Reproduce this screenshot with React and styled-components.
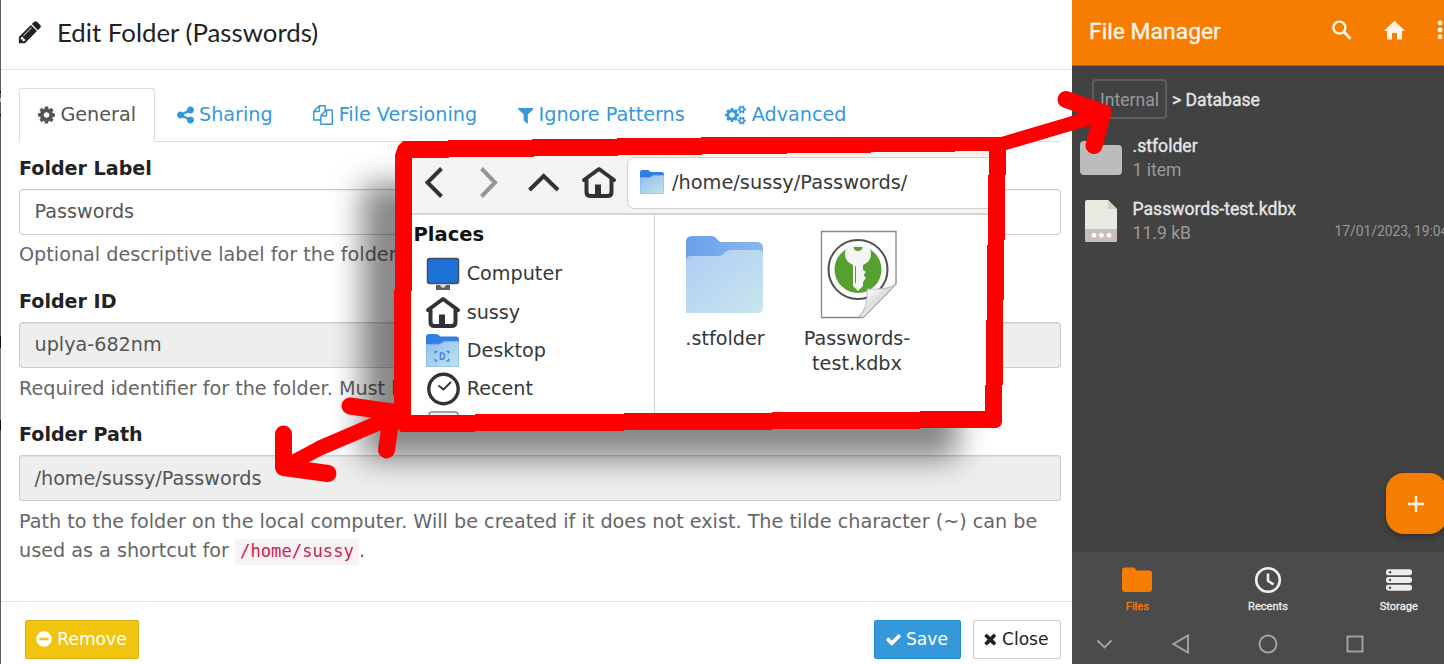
import React from "react";
import styled, { createGlobalStyle, css } from "styled-components";

const Global = createGlobalStyle`
  * { box-sizing: border-box; }
  body { margin: 0; background: #fff; overflow: hidden; }
`;

const sans = `"DejaVu Sans", sans-serif`;

const Page = styled.div`
  position: relative;
  display: flex;
  width: 1444px;
  height: 664px;
  overflow: hidden;
  font-family: ${sans};
`;

/* ---------- folder dialog ---------- */

const Backdrop = styled.div`
  width: 1px;
  background: linear-gradient(#5c5c60 0 91px, #111 91px 93px, #5c5c60 93px 98px, #bbb 98px 102px, #5c5c60 102px 114px, #111 114px 116px, #55555a 116px 336px, #111 336px 348px, #77777b 348px 420px, #111 420px 430px, #5c5c60 430px);
`;

const Dialog = styled.section`
  display: flex;
  flex-direction: column;
  width: 1071px;
  background: #fff;
  color: #222;
  font-size: 19.2px;
  white-space: nowrap;
`;

const DialogHeader = styled.header`
  display: flex;
  align-items: center;
  gap: 15px;
  height: 70px;
  padding: 0 17px 5px;
  border-bottom: 1px solid #e2e2e2;
`;

const Title = styled.h4`
  margin: 0;
  padding-bottom: 1px;
  font: 400 25.8px/30px Lato, sans-serif;
  color: #222;
`;

const Tabs = styled.nav`
  display: flex;
  gap: 2.3px;
  margin: 18px 11px 0 18px;
  height: 54px;
  border-bottom: 1px solid #ddd;
`;

const Tab = styled.a`
  display: flex;
  align-items: center;
  gap: 5.4px;
  height: 54px;
  padding: 0 18.3px 1px 18px;
  border: 1px solid transparent;
  color: #3498db;
  ${(p) =>
    p.$active &&
    css`
      color: #555;
      background: #fff;
      border-color: #ddd #ddd transparent;
      border-radius: 3px 3px 0 0;
    `}
`;

const Form = styled.div`
  flex: 1;
  padding: 12px 11px 0 18px;
`;

const Group = styled.div`
  display: flex;
  flex-direction: column;
  margin-bottom: 18px;

  &:last-child {
    margin-top: -1px;
  }
`;

const Label = styled.label`
  height: 28px;
  margin-bottom: 7px;
  font-weight: 700;
  font-size: 19.1px;
  line-height: 29px;
`;

const Field = styled.div`
  height: 46px;
  margin-bottom: 5px;
  padding: 0 14.5px;
  border: 1px solid #ccc;
  border-radius: 3px;
  background: ${(p) => (p.$readOnly ? "#eee" : "#fff")};
  box-shadow: inset 0 1px 1px rgba(0, 0, 0, 0.075);
  color: #555;
  font-size: 19.2px;
  line-height: ${(p) => p.$line ?? 43}px;
`;

const Help = styled.p`
  margin: 0;
  padding-top: ${(p) => p.$drop ?? 0}px;
  color: #666;
  line-height: 29px;
`;

const Code = styled.code`
  padding: 2px 5px 4px;
  border-radius: 3px;
  background: #f9f2f4;
  color: #c7254e;
  font: 17.2px "DejaVu Sans Mono", monospace;
`;

const DialogFooter = styled.footer`
  display: flex;
  align-items: flex-start;
  gap: 12px;
  height: 63px;
  padding: 18px 11px 0 24px;
  border-top: 1px solid #e2e2e2;
`;

const tones = {
  warning: ["#f1c40f", "#dab10d", "#fff"],
  primary: ["#3498db", "#258cd1", "#fff"],
  plain: ["#fff", "#ccc", "#222"],
};

const Button = styled.button`
  display: flex;
  align-items: center;
  justify-content: center;
  gap: 5px;
  width: ${(p) => p.$width}px;
  height: 39px;
  margin: 0 ${(p) => (p.$push ? "auto" : 0)} 0 0;
  padding: 0 1px 1px 0;
  border: 1px solid ${(p) => tones[p.$tone][1]};
  border-radius: 2px;
  background: ${(p) => tones[p.$tone][0]};
  color: ${(p) => tones[p.$tone][2]};
  font: 17.1px ${sans};
  white-space: nowrap;
`;

const glyphs = {
  pencil: "M491 1536l91-91-235-235-91 91v107h128v128h107zm523-928q0-22-22-22-10 0-17 7l-542 542q-7 7-7 17 0 22 22 22 10 0 17-7l542-542q7-7 7-17zm-54-192l416 416-832 832h-416v-416zm683 96q0 53-37 90l-166 166-416-416 166-165q36-38 90-38 53 0 91 38l235 234q37 39 37 91z",
  cog: "M1152 896q0-106-75-181t-181-75-181 75-75 181 75 181 181 75 181-75 75-181zm512-109v222q0 12-8 23t-20 13l-185 28q-19 54-39 91 35 50 107 138 10 12 10 25t-9 23q-27 37-99 108t-94 71q-12 0-26-9l-138-108q-44 23-91 38-16 136-29 186-7 28-36 28h-222q-14 0-24.5-8.5t-11.5-21.5l-28-184q-49-16-90-37l-141 107q-10 9-25 9-14 0-25-11-126-114-165-168-7-10-7-23 0-12 8-23 15-21 51-66.5t54-70.5q-27-50-41-99l-183-27q-13-2-21-12.5t-8-23.5v-222q0-12 8-23t19-13l186-28q14-46 39-92-40-57-107-138-10-12-10-24 0-10 9-23 26-36 98.5-107.5t94.5-71.5q13 0 26 10l138 107q44-23 91-38 16-136 29-186 7-28 36-28h222q14 0 24.5 8.5t11.5 21.5l28 184q49 16 90 37l142-107q9-9 24-9 13 0 25 10 129 119 165 170 7 8 7 22 0 12-8 23-15 21-51 66.5t-54 70.5q26 50 41 98l183 28q13 2 21 12.5t8 23.5z",
  share: "M1344 1024q133 0 226.5 93.5t93.5 226.5-93.5 226.5-226.5 93.5-226.5-93.5-93.5-226.5q0-12 2-34l-360-180q-92 86-218 86-133 0-226.5-93.5t-93.5-226.5 93.5-226.5 226.5-93.5q126 0 218 86l360-180q-2-22-2-34 0-133 93.5-226.5t226.5-93.5 226.5 93.5 93.5 226.5-93.5 226.5-226.5 93.5q-126 0-218-86l-360 180q2 22 2 34t-2 34l360 180q92-86 218-86z",
  files: "M1696 384q40 0 68 28t28 68v1216q0 40-28 68t-68 28h-960q-40 0-68-28t-28-68v-288h-544q-40 0-68-28t-28-68v-672q0-40 20-88t48-76l408-408q28-28 76-48t88-20h416q40 0 68 28t28 68v328q68-40 128-40h416zm-544 213l-299 299h299v-299zm-640-384l-299 299h299v-299zm196 647l316-316v-416h-384v416q0 40-28 68t-68 28h-416v640h512v-256q0-40 20-88t48-76zm956 804v-1152h-384v416q0 40-28 68t-68 28h-416v640h896z",
  filter: "M1595 295q17 41-14 70l-493 493v742q0 42-39 59-13 5-25 5-27 0-45-19l-256-256q-19-19-19-45v-486l-493-493q-31-29-14-70 17-39 59-39h1280q42 0 59 39z",
  minus: "M1344 960v-128q0-26-19-45t-45-19h-768q-26 0-45 19t-19 45v128q0 26 19 45t45 19h768q26 0 45-19t19-45zm320-64q0 209-103 385.5t-279.5 279.5-385.5 103-385.5-103-279.5-279.5-103-385.5 103-385.5 279.5-279.5 385.5-103 385.5 103 279.5 279.5 103 385.5z",
  check: "M1671 566q0 40-28 68l-724 724-136 136q-28 28-68 28t-68-28l-136-136-362-362q-28-28-28-68t28-68l136-136q28-28 68-28t68 28l294 295 656-657q28-28 68-28t68 28l136 136q28 28 28 68z",
  times: "M1490 1322q0 40-28 68l-136 136q-28 28-68 28t-68-28l-294-294-294 294q-28 28-68 28t-68-28l-136-136q-28-28-28-68t28-68l294-294-294-294q-28-28-28-68t28-68l136-136q28-28 68-28t68 28l294 294 294-294q28-28 68-28t68 28l136 136q28 28 28 68t-28 68l-294 294 294 294q28 28 28 68z",
  cogs: "M896 896q0-106-75-181t-181-75-181 75-75 181 75 181 181 75 181-75 75-181zm768 512q0-52-38-90t-90-38-90 38-38 90q0 53 37.5 90.5t90.5 37.5 90.5-37.5 37.5-90.5zm0-1024q0-52-38-90t-90-38-90 38-38 90q0 53 37.5 90.5t90.5 37.5 90.5-37.5 37.5-90.5zm-384 421v185q0 10-7 19.5t-16 10.5l-155 24q-11 35-32 76 34 48 90 115 7 11 7 20 0 12-7 19-23 30-82.5 89.5t-78.5 59.5q-11 0-21-7l-115-90q-37 19-77 31-11 108-23 155-7 24-30 24h-186q-11 0-20-7.5t-10-17.5l-23-153q-34-10-75-31l-118 89q-7 7-20 7-11 0-21-8-144-133-144-160 0-9 7-19 10-14 41-53t47-61q-23-44-35-82l-152-24q-10-1-17-9.5t-7-19.5v-185q0-10 7-19.5t16-10.5l155-24q11-35 32-76-34-48-90-115-7-11-7-20 0-12 7-20 22-30 82-89t79-59q11 0 21 7l115 90q34-18 77-32 11-108 23-154 7-24 30-24h186q11 0 20 7.5t10 17.5l23 153q34 10 75 31l118-89q8-7 20-7 11 0 21 8 144 133 144 160 0 8-7 19-12 16-42 54t-45 60q23 48 34 82l152 23q10 2 17 10.5t7 19.5zm640 533v140q0 16-149 31-12 27-30 52 51 113 51 138 0 4-4 7-122 71-124 71-8 0-46-47t-52-68q-20 2-30 2t-30-2q-14 21-52 68t-46 47q-2 0-124-71-4-3-4-7 0-25 51-138-18-25-30-52-149-15-149-31v-140q0-16 149-31 13-29 30-52-51-113-51-138 0-4 4-7 4-2 35-20t59-34 30-16q8 0 46 46.5t52 67.5q20-2 30-2t30 2q51-71 92-112l6-2q4 0 124 70 4 3 4 7 0 25-51 138 17 23 30 52 149 15 149 31zm0-1024v140q0 16-149 31-12 27-30 52 51 113 51 138 0 4-4 7-122 71-124 71-8 0-46-47t-52-68q-20 2-30 2t-30-2q-14 21-52 68t-46 47q-2 0-124-71-4-3-4-7 0-25 51-138-18-25-30-52-149-15-149-31v-140q0-16 149-31 13-29 30-52-51-113-51-138 0-4 4-7 4-2 35-20t59-34 30-16q8 0 46 46.5t52 67.5q20-2 30-2t30 2q51-71 92-112l6-2q4 0 124 70 4 3 4 7 0 25-51 138 17 23 30 52 149 15 149 31z",
};

function Glyph({ name, box = "128 0 1536 1792", w, h }) {
  return (
    <svg width={w} height={h} viewBox={box} fill="currentColor">
      <path d={glyphs[name]} />
    </svg>
  );
}

function FolderDialog() {
  return (
    <Dialog>
      <DialogHeader>
        <Glyph name="pencil" w={24} h={26} />
        <Title>Edit Folder (Passwords)</Title>
      </DialogHeader>
      <Tabs>
        <Tab $active><Glyph name="cog" w={17} h={20} />General</Tab>
        <Tab><Glyph name="share" w={17} h={20} />Sharing</Tab>
        <Tab><Glyph name="files" box="0 0 1792 1792" w={20} h={20} />File Versioning</Tab>
        <Tab><Glyph name="filter" box="192 0 1408 1792" w={15.5} h={20} />Ignore Patterns</Tab>
        <Tab><Glyph name="cogs" box="0 0 1920 1792" w={21} h={20} />Advanced</Tab>
      </Tabs>
      <Form>
        <Group>
          <Label>Folder Label</Label>
          <Field>Passwords</Field>
          <Help>Optional descriptive label for the folder.</Help>
        </Group>
        <Group>
          <Label>Folder ID</Label>
          <Field $readOnly>uplya-682nm</Field>
          <Help $drop={1}>Required identifier for the folder. Must be</Help>
        </Group>
        <Group>
          <Label>Folder Path</Label>
          <Field $readOnly $line={45}>/home/sussy/Passwords</Field>
          <Help $drop={1}>
            Path to the folder on the local computer. Will be created if it does not exist. The tilde character (~) can be
            <br />
            used as a shortcut for <Code>/home/sussy</Code>.
          </Help>
        </Group>
      </Form>
      <DialogFooter>
        <Button $tone="warning" $width={114} $push><Glyph name="minus" w={16} h={18} />Remove</Button>
        <Button $tone="primary" $width={87}><Glyph name="check" w={15} h={17} />Save</Button>
        <Button $tone="plain" $width={88}><Glyph name="times" box="250 0 1292 1792" w={12.5} h={18} />Close</Button>
      </DialogFooter>
    </Dialog>
  );
}

/* ---------- phone ---------- */

const Phone = styled.section`
  position: relative;
  display: flex;
  flex-direction: column;
  width: 372px;
  background: #424242;
  color: #e6e6e6;
  font-family: Roboto, sans-serif;
  white-space: nowrap;
  overflow: hidden;
`;

const AppBar = styled.header`
  display: flex;
  align-items: center;
  height: 66px;
  padding: 0 0 4px 17px;
  background: #f77d00;
  border-bottom: 1px solid #a9601a;
  color: #fdf3e8;
`;

const AppTitle = styled.div`
  width: 243px;
  padding-top: 2px;
  font-size: 22.9px;
  -webkit-text-stroke: 0.35px currentColor;
`;

const AppIcons = styled.div`
  display: flex;
  align-items: center;
  flex: none;
  color: #fff4e8;
`;

const Crumbs = styled.div`
  display: flex;
  align-items: center;
  gap: 5px;
  margin: 13px 0 14px 20px;
  height: 40px;
  font-size: 17.6px;
`;

const CrumbBox = styled.span`
  width: 75px;
  height: 40px;
  border: 2px solid #5e5e5e;
  border-radius: 4px;
  color: #999;
  line-height: 38px;
  text-align: center;
`;

const Crumb = styled.span`
  padding-top: 2px;
  -webkit-text-stroke: 0.35px currentColor;
`;

const FileRow = styled.div`
  display: flex;
  height: 63px;
  padding-left: 8px;
`;

const FileIcon = styled.div`
  flex: none;
  width: 52.5px;
  padding: ${(p) => p.$pad};
`;

const FileText = styled.div`
  flex: none;
  width: 202px;
  padding-top: 1px;
  font-size: 17.6px;
  line-height: 24px;
`;

const FileName = styled.div`
  -webkit-text-stroke: 0.35px currentColor;
`;

const Muted = styled.div`
  color: #999;
`;

const Stamp = styled.div`
  padding-top: 23px;
  color: #999;
  font-size: 13.9px;
  line-height: 24px;
  letter-spacing: -0.05px;
`;

const Fab = styled.div`
  position: absolute;
  left: 313.5px;
  top: 473px;
  display: flex;
  align-items: center;
  justify-content: center;
  width: 61px;
  height: 61px;
  border-radius: 18px;
  background: #f77d00;
  box-shadow: 0 3px 6px rgba(0, 0, 0, 0.3);
`;

const BottomNav = styled.nav`
  display: flex;
  height: 70px;
  margin-top: auto;
  padding-top: 14px;
  background: #4b4b4b;
`;

const NavItem = styled.div`
  display: flex;
  flex: 0 0 130.7px;
  flex-direction: column;
  align-items: center;
  gap: 6px;
  color: ${(p) => (p.$active ? "#f77d00" : "#eee")};
  font-size: 11.1px;
  line-height: 14px;
  -webkit-text-stroke: 0.3px currentColor;
`;

const SystemBar = styled.div`
  display: flex;
  height: 42px;
  padding: 2px 0 0 17px;
  background: #4b4b4b;
`;

function PhoneScreen() {
  return (
    <Phone>
      <AppBar>
        <AppTitle>File Manager</AppTitle>
        <AppIcons>
          <svg width="112" height="24" viewBox="0 0 112 24" fill="none">
            <circle cx="7.4" cy="8.6" r="6" stroke="currentColor" strokeWidth="2.4" />
            <path d="M12 13l6.5 6.8" stroke="currentColor" strokeWidth="2.8" />
            <path d="M62.5 1.8L73 11.8H70V20.5H65V14H60V20.5H55V11.8H52Z" fill="currentColor" />
            <circle cx="108" cy="4" r="2.4" fill="currentColor" />
            <circle cx="108" cy="11" r="2.4" fill="currentColor" />
            <circle cx="108" cy="17.8" r="2.4" fill="currentColor" />
          </svg>
        </AppIcons>
      </AppBar>
      <Crumbs>
        <CrumbBox>Internal</CrumbBox>
        <Crumb>&gt; Database</Crumb>
      </Crumbs>
      <FileRow>
        <FileIcon $pad="8px 0 0 0">
          <svg width="42" height="34" viewBox="0 0 42 34">
            <path d="M4 0H15L20 4H38Q42 4 42 8V30Q42 34 38 34H4Q0 34 0 30V4Q0 0 4 0Z" fill="#bcbcbc" />
          </svg>
        </FileIcon>
        <FileText>
          <FileName>.stfolder</FileName>
          <Muted>1 item</Muted>
        </FileText>
      </FileRow>
      <FileRow>
        <FileIcon $pad="4px 0 0 5px">
          <svg width="32" height="42" viewBox="0 0 32 42">
            <path d="M2 0H23L32 9V40Q32 42 30 42H2Q0 42 0 40V2Q0 0 2 0Z" fill="#e8e9e0" />
            <path d="M23 0L32 9H23Z" fill="#d0d0c4" />
            <path d="M0 29H32V40Q32 42 30 42H2Q0 42 0 40Z" fill="#cbbdb9" />
            <g fill="#fff"><circle cx="9" cy="35.3" r="2.4" /><circle cx="16.4" cy="35.3" r="2.4" /><circle cx="24" cy="35.3" r="2.4" /></g>
          </svg>
        </FileIcon>
        <FileText>
          <FileName>Passwords-test.kdbx</FileName>
          <Muted>11.9 kB</Muted>
        </FileText>
        <Stamp>17/01/2023, 19:04</Stamp>
      </FileRow>
      <Fab>
        <svg width="16" height="16" viewBox="0 0 16 16" stroke="#fff4e6" strokeWidth="2.4">
          <path d="M8 0V16M0 8H16" />
        </svg>
      </Fab>
      <BottomNav>
        <NavItem $active>
          <svg width="30" height="28" viewBox="0 0 30 28">
            <path d="M3 1.5H12L15 4.5H27Q30 4.5 30 7.5V23Q30 26 27 26H3Q0 26 0 23V4.5Q0 1.5 3 1.5Z" fill="currentColor" />
          </svg>
          Files
        </NavItem>
        <NavItem>
          <svg width="28" height="28" viewBox="0 0 28 28" fill="none" stroke="currentColor" strokeWidth="2.6">
            <circle cx="14" cy="14" r="11.8" />
            <path d="M14 7.5V14.8L19.5 18.5" />
          </svg>
          Recents
        </NavItem>
        <NavItem>
          <svg width="26" height="28" viewBox="0 0 26 28">
            <g fill="currentColor">
              <rect y="3.3" width="26" height="6" rx="2.4" />
              <rect y="11" width="26" height="6" rx="2.4" />
              <rect y="18.7" width="26" height="6" rx="2.4" />
            </g>
            <g fill="#555"><circle cx="4" cy="6.3" r="1.3" /><circle cx="4" cy="14" r="1.3" /><circle cx="4" cy="21.7" r="1.3" /></g>
          </svg>
          Storage
        </NavItem>
      </BottomNav>
      <SystemBar>
        <svg width="290" height="40" viewBox="0 0 290 40" fill="none" stroke="#a3a3a3" strokeWidth="1.9">
          <path d="M8.5 16.5L15.5 23.5L22.5 16.5" />
          <path d="M99 11.5V28.5L84.5 20Z" />
          <circle cx="179" cy="20" r="8.5" />
          <rect x="258.5" y="12.5" width="15" height="15" />
        </svg>
      </SystemBar>
    </Phone>
  );
}

/* ---------- file browser window over the dialog ---------- */

const Shadow = styled.div`
  position: absolute;
  left: 362px;
  top: 184px;
  width: 596px;
  height: 275px;
  background: rgba(0, 0, 0, 0.47);
  filter: blur(15px);
`;

const Browser = styled.section`
  position: absolute;
  left: 404px;
  top: 148px;
  display: flex;
  flex-direction: column;
  width: 592px;
  height: 274px;
  overflow: hidden;
  background: #fff;
  color: #34393b;
  font-size: 19.2px;
  white-space: nowrap;
`;

const Toolbar = styled.div`
  display: flex;
  flex: none;
  height: 67px;
  padding-top: 9px;
  background: #f5f4f2;
  border-bottom: 2px solid #d8d4d0;
`;

const Location = styled.div`
  display: flex;
  align-items: center;
  flex: 1;
  gap: 8px;
  height: 52px;
  padding: 0 0 2px 12px;
  border: 1.5px solid #d5d0cc;
  border-right: 0;
  border-radius: 7px 0 0 7px;
  background: #fff;
  font-size: 19.35px;
`;

const HomeCell = styled.div`
  width: 46px;
  padding-top: 8px;
`;

const Panes = styled.div`
  display: flex;
  flex: 1;
  min-height: 0;
`;

const Places = styled.aside`
  width: 251px;
  padding-left: 9.5px;
  border-right: 1.5px solid #d5d0cc;
`;

const PlacesTitle = styled.div`
  height: 38px;
  color: #111;
  font-weight: 700;
  font-size: 19.5px;
  line-height: 39px;
`;

const Place = styled.div`
  display: flex;
  align-items: center;
  height: 38.4px;
  padding: 3px 0 0 12px;
`;

const PlaceIcon = styled.span`
  display: flex;
  justify-content: center;
  width: 36px;
  margin: 0 6.2px 0 -1px;
`;

const Files = styled.div`
  display: flex;
  padding: 15px 0 0 4px;
`;

const Item = styled.div`
  display: flex;
  flex-direction: column;
  align-items: center;
  width: 132px;
  line-height: 25px;
  text-align: center;
`;

const HomeIcon = () => (
  <svg width="36" height="34" viewBox="0 0 36 34" fill="none" stroke="#2e3436" strokeWidth="4" strokeLinecap="round" strokeLinejoin="round">
    <path d="M3 15L18 4L33 15" />
    <path d="M5.5 15V27Q5.5 31 9.5 31H26.5Q30.5 31 30.5 27V15" />
    <path d="M14 31V19.5H20V31Z" fill="#2e3436" stroke="none" />
  </svg>
);

const SmallFolder = ({ size, mark }) => (
  <svg width={size} height={size} viewBox="0 0 32 32">
    <defs>
      <linearGradient id={`sf${size}`} x1="0" y1="0" x2="1" y2="1">
        <stop offset="0" stopColor="#95bdf2" />
        <stop offset="1" stopColor="#bfe4e8" />
      </linearGradient>
    </defs>
    <path d="M0 3Q0 0 3 0H10Q12 0 14 2.5H29Q32 2.5 32 5.5V22H0Z" fill="#2f7fe2" />
    <path d="M0 10H12Q14 10 16 8Q17 7 19 7H32V29Q32 32 29 32H0Z" fill={`url(#sf${size})`} stroke="#73a7ee" strokeWidth=".8" />
    {mark && (
      <g fill="none" stroke="#4187e2" strokeWidth="1.4">
        <path d="M9 19V17H11M20 17H22V19M9 24V26H11M20 26H22V24" />
        <path d="M14 18.5V24.5H15.5Q18 24.5 18 21.5T15.5 18.5Z" />
      </g>
    )}
  </svg>
);

function FileBrowser() {
  return (
    <Browser>
      <Toolbar>
        <svg width="177" height="50" viewBox="0 0 177 50" fill="none" stroke="#2e3436" strokeWidth="4">
          <path d="M37.5 11.5L23.5 25.5L37.5 39.5" />
          <path d="M77.5 11.5L91 25.5L77.5 39.5" stroke="#929696" />
          <path d="M125.5 33L139.7 19L154 33" />
        </svg>
        <HomeCell><HomeIcon /></HomeCell>
        <Location>
          <SmallFolder size={24} />
          <span>/home/sussy/Passwords/</span>
        </Location>
      </Toolbar>
      <Panes>
        <Places>
          <PlacesTitle>Places</PlacesTitle>
          <Place>
            <PlaceIcon>
              <svg width="34" height="34" viewBox="0 0 34 34">
                <rect x="1.5" y="1.5" width="31" height="25" rx="2" fill="#1c71d8" stroke="#4d4960" strokeWidth="1.5" />
                <path d="M10 28H24V33H10Z" fill="#5e5c64" />
                <path d="M14 28H20Q19 31 17 31T14 28Z" fill="#d8d8d8" />
              </svg>
            </PlaceIcon>
            Computer
          </Place>
          <Place><PlaceIcon><HomeIcon /></PlaceIcon>sussy</Place>
          <Place><PlaceIcon><SmallFolder size={33} mark /></PlaceIcon>Desktop</Place>
          <Place>
            <PlaceIcon>
              <svg width="34" height="34" viewBox="0 0 34 34" fill="none" stroke="#2e3436">
                <circle cx="17.5" cy="17" r="14.7" strokeWidth="3.4" />
                <path d="M12.5 13.5L17.5 17.5L25 10" strokeWidth="1.8" />
              </svg>
            </PlaceIcon>
            Recent
          </Place>
          <Place>
            <PlaceIcon>
              <svg width="34" height="38" viewBox="0 0 34 38">
                <rect x="3" y="4" width="29" height="30" rx="3" fill="#f0f0f0" stroke="#8a8c8d" strokeWidth="1.5" />
              </svg>
            </PlaceIcon>
          </Place>
        </Places>
        <Files>
          <Item>
            <svg width="78" height="96" viewBox="0 0 78 96">
              <defs>
                <linearGradient id="back" x1="0" x2="1"><stop offset="0" stopColor="#68a1ea" /><stop offset="1" stopColor="#8ab7ef" /></linearGradient>
                <linearGradient id="front" x1="0" y1="0" x2="1" y2="1"><stop offset="0" stopColor="#afcdf6" /><stop offset="1" stopColor="#c9e5ec" /></linearGradient>
              </defs>
              <path d="M0 12Q0 6 6 6H26Q29 6 31 9L34 12H71Q77 12 77 18V50H0Z" fill="url(#back)" />
              <path d="M0 31Q0 26 5 26H32Q36 26 38 23Q41 20 45 20H73Q77 20 77 25V78Q77 83 72 83H0Z" fill="url(#front)" />
            </svg>
            .stfolder
          </Item>
          <Item>
            <svg width="80" height="96" viewBox="-2 0 80 96">
              <defs>
                <linearGradient id="curl" x1="0" y1="0" x2="1" y2="1"><stop offset="0" stopColor="#fff" /><stop offset=".3" stopColor="#f2f2f2" /><stop offset=".48" stopColor="#dcdcdc" /><stop offset=".62" stopColor="#fff" /><stop offset="1" stopColor="#b5b5b5" /></linearGradient>
              </defs>
              <path d="M2.5 1.5H77V54L44 87.5H2.5Z" fill="#fff" stroke="#888" strokeWidth="1.3" />
              <circle cx="39" cy="39.5" r="29.5" fill="#fff" stroke="#505050" strokeWidth="2" />
              <circle cx="39" cy="39.5" r="23.5" fill="#55a02f" />
              <path d="M26.5 20Q39 9 51.5 20Q54 31 44 35V40L47 42L44.5 45L47 48L44 52V56L39 61L34 56V35Q24 31 26.5 20Z" fill="#f5f5f5" />
              <path d="M34.5 17H43.5Q43 21 39 21T34.5 17Z" fill="#55a02f" />
              <path d="M36.5 36V53" stroke="#55a02f" strokeWidth="1" />
              <path d="M77 54Q70 60 48 59Q49 79 40 86.5L44 87.5Z" fill="url(#curl)" stroke="#aaa" strokeWidth=".8" />
            </svg>
            Passwords-<br />test.kdbx
          </Item>
        </Files>
      </Panes>
    </Browser>
  );
}

/* ---------- hand-drawn red marks ---------- */

const Marks = styled.svg`
  position: absolute;
  inset: 0;
  fill: none;
  stroke: #f00;
  stroke-linecap: round;
  stroke-linejoin: round;
`;

function RedMarks() {
  return (
    <Marks width="1444" height="664" viewBox="0 0 1444 664" strokeWidth="17">
      <path
        stroke="none"
        fill="#f00"
        fillRule="evenodd"
        d="M395 155L398 146L403 141H448V140H532V139H617V138H701V137H1000L1006 142V175H1005V240H1004V300H1003V385H1002V422Q1001 428 995 428H920V429H772V430H624V431H475V432H401L394 424V290H395Z
        M412 158V291H411V415H475V414H624V413H772V412H920V411H985V385H986V320H987V245H988V175H989V151H955V152H871V153H787V154H702V155H618V156H534V157H449V158Z"
      />
      <path d="M1066 99.5L1103 112.5L1094 145.5" />
      <path d="M1002 144L1100 115" strokeWidth="14" />
      <path d="M283.5 434V467.5L328 473.5" />
      <path d="M290 464L320 448L390 418" strokeWidth="15" />
      <path d="M350 406L392 412L386.5 450" />
    </Marks>
  );
}

export default function App() {
  return (
    <Page>
      <Global />
      <Backdrop />
      <FolderDialog />
      <PhoneScreen />
      <Shadow />
      <FileBrowser />
      <RedMarks />
    </Page>
  );
}
